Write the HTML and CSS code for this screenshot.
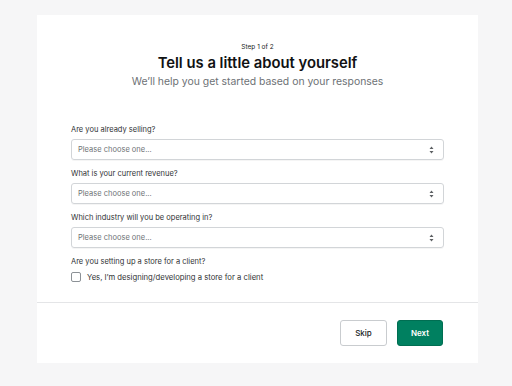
FILE: index.html
```html
<!DOCTYPE html>
<html>
<head>
<meta charset="utf-8">
<link rel="stylesheet" href="styles.css">
</head>
<body>
<div class="card">
  <div class="header">
    <div class="step">Step 1 of 2</div>
    <h1 class="title">Tell us a little about yourself</h1>
    <p class="subtitle">We’ll help you get started based on your responses</p>
  </div>
  <div class="form">
    <div class="field">
      <div class="label">Are you already selling?</div>
      <div class="select"><span>Please choose one...</span><svg class="arrows" width="5" height="8" viewBox="0 0 5 8"><path d="M2.5 0.5 L4.5 3 H0.5 Z M2.5 7.5 L4.5 5 H0.5 Z" fill="#5c5f62"/></svg></div>
    </div>
    <div class="field">
      <div class="label">What is your current revenue?</div>
      <div class="select"><span>Please choose one...</span><svg class="arrows" width="5" height="8" viewBox="0 0 5 8"><path d="M2.5 0.5 L4.5 3 H0.5 Z M2.5 7.5 L4.5 5 H0.5 Z" fill="#5c5f62"/></svg></div>
    </div>
    <div class="field">
      <div class="label">Which industry will you be operating in?</div>
      <div class="select"><span>Please choose one...</span><svg class="arrows" width="5" height="8" viewBox="0 0 5 8"><path d="M2.5 0.5 L4.5 3 H0.5 Z M2.5 7.5 L4.5 5 H0.5 Z" fill="#5c5f62"/></svg></div>
    </div>
    <div class="field">
      <div class="label">Are you setting up a store for a client?</div>
      <label class="check"><span class="box"></span><span>Yes, I’m designing/developing a store for a client</span></label>
    </div>
  </div>
  <div class="footer">
    <button class="btn skip">Skip</button>
    <button class="btn next">Next</button>
  </div>
</div>
</body>
</html>
```
FILE: styles.css
```css
* { box-sizing: border-box; }
html, body { margin: 0; padding: 0; }
body {
  background: #f6f6f7;
  font-family: Inter, "Noto Sans", sans-serif;
  color: #202223;
  width: 512px;
  height: 386px;
  overflow: hidden;
}
.card {
  margin: 15px 0 0 37px;
  width: 441px;
  height: 348px;
  background: #ffffff;
  display: flex;
  flex-direction: column;
}
.header {
  padding-top: 28px;
  text-align: center;
}
.step {
  font-size: 6.5px;
  line-height: 9px;
  color: #202223;
}
.title {
  margin: 0;
  margin-top: 1px;
  font-size: 14.8px;
  line-height: 20px;
  font-weight: 600;
  color: #111213;
}
.subtitle {
  margin: 0;
  margin-top: 2px;
  font-size: 10.4px;
  line-height: 14px;
  color: #6d7175;
}
.form {
  padding: 36px 34px 0 34px;
  display: flex;
  flex-direction: column;
  gap: 9px;
}
.field {
  display: flex;
  flex-direction: column;
  gap: 4px;
}
.label {
  font-size: 7.5px;
  line-height: 10px;
  color: #303234;
}
.select {
  height: 21px;
  border: 1px solid #d2d5d8;
  border-radius: 3px;
  display: flex;
  align-items: center;
  justify-content: space-between;
  padding: 0 9px 0 6px;
  font-size: 7.5px;
  color: #6d7175;
  box-shadow: 0 1px 0 rgba(0,0,0,0.04);
}
.check {
  display: flex;
  align-items: center;
  gap: 6px;
  font-size: 7.7px;
  color: #303234;
  margin-top: 1px;
}
.box {
  width: 10px;
  height: 10px;
  border: 1px solid #8c9196;
  border-radius: 2px;
}
.footer {
  margin-top: auto;
  border-top: 1px solid #e4e5e7;
  height: 61px;
  display: flex;
  justify-content: flex-end;
  align-items: center;
  gap: 10px;
  padding: 0 35px 0 0;
}
.btn {
  height: 26px;
  border-radius: 3px;
  font-family: Inter, "Noto Sans", sans-serif;
  font-size: 8px;
  padding: 0;
}
.skip {
  width: 47px;
  background: #ffffff;
  border: 1px solid #c9cccf;
  color: #202223;
  font-weight: 500;
}
.next {
  width: 46px;
  background: #008060;
  border: 1px solid #006e52;
  color: #ffffff;
  font-weight: 600;
}
```
